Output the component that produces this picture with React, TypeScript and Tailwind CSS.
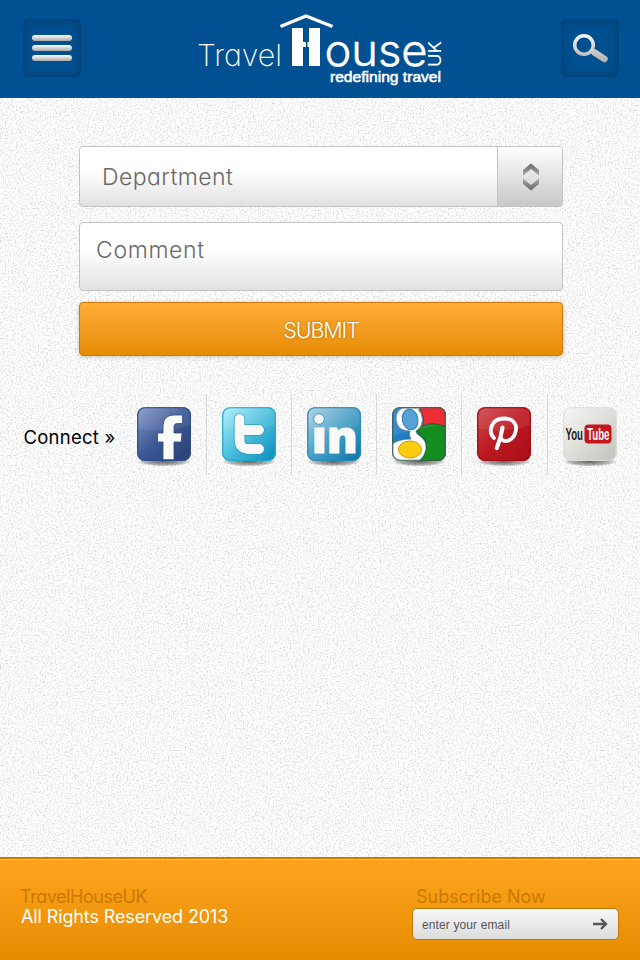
import React from 'react';

const gothic = "font-['Inter','Lato',sans-serif] [font-feature-settings:'cv11']";

function Paper() {
  return (
    <svg className="absolute inset-0 -z-10 h-full w-full" aria-hidden="true">
      <filter id="grain" x="0" y="0" width="100%" height="100%" colorInterpolationFilters="sRGB">
        <feTurbulence type="fractalNoise" baseFrequency="0.6" numOctaves="2" seed="4" />
        <feColorMatrix values="0.4 0 0 0 0.778  0.4 0 0 0 0.778  0.4 0 0 0 0.778  0 0 0 0 1" />
      </filter>
      <rect width="100%" height="100%" filter="url(#grain)" />
    </svg>
  );
}

function Logo() {
  return (
    <svg width="260" height="90" viewBox="0 0 260 90" fill="#fff" className={gothic}>
      <text x="7" y="60.7" fontSize="30" fontWeight="200" textLength="85" lengthAdjust="spacingAndGlyphs">Travel</text>
      <path d="M90.500 21.500L116 11L142.500 21.500" fill="none" stroke="#fff" strokeWidth="3.400" />
      <path d="M102 23h11v14h3v5h-3v19h-11zM119 23h11v38h-11V42h-1.500V37h1.500z" />
      <text x="134.500" y="61" fontSize="44" fontWeight="300" stroke="#fff" strokeWidth=".5" textLength="103" lengthAdjust="spacingAndGlyphs">ouse</text>
      <text transform="translate(250.500 62) rotate(-90)" fontSize="17" textLength="26" lengthAdjust="spacingAndGlyphs">UK</text>
      <text x="140" y="77" fontSize="14.500" fontWeight="400" stroke="#fff" strokeWidth=".55" fontFamily="Liberation Sans" textLength="111" lengthAdjust="spacingAndGlyphs">redefining travel</text>
    </svg>
  );
}

function HeaderButton({ label, children }: { label: string; children: React.ReactNode }) {
  return (
    <button aria-label={label} className="flex size-[58px] items-center justify-center rounded-[5px] bg-[#004f8e] shadow-[inset_0_0_9px_1px_#003d70]">
      {children}
    </button>
  );
}

function Tile({ id, from, mid, to, edge, gloss = true, children }: {
  id: string; from: string; mid: string; to: string; edge: string; gloss?: boolean; children: React.ReactNode;
}) {
  return (
    <svg width="54" height="62" viewBox="0 0 54 62" className="block overflow-visible">
      <defs>
        <linearGradient id={id} x1="0" y1="0" x2="1" y2="1">
          <stop offset="0" stopColor={from} />
          <stop offset=".5" stopColor={mid} />
          <stop offset="1" stopColor={to} />
        </linearGradient>
        <clipPath id={id + 'clip'}><rect width="54" height="54" rx="8" /></clipPath>
        <radialGradient id={id + 'shade'}>
          <stop offset="0" stopColor="#000" stopOpacity=".6" />
          <stop offset=".7" stopColor="#000" stopOpacity=".3" />
          <stop offset="1" stopColor="#000" stopOpacity="0" />
        </radialGradient>
      </defs>
      <ellipse cx="27" cy="54.500" rx="27" ry="5" fill={'url(#' + id + 'shade)'} />
      <rect width="54" height="54" rx="8" fill={'url(#' + id + ')'} />
      <g clipPath={'url(#' + id + 'clip)'}>
        {gloss && <path d="M0 0H54V18Q27 27 0 21Z" fill="#fff" opacity=".08" />}
        {children}
      </g>
      <rect x=".75" y=".75" width="52.500" height="52.500" rx="7.300" fill="none" stroke={edge} strokeWidth="1.200" />
    </svg>
  );
}

function Facebook() {
  return (
    <Tile id="fb" from="#8a9cc8" mid="#3b5795" to="#283f70" edge="#2f4f92">
      <path d="M26 52.700V35H20.500V26H26V20C26 11.500 30 8 38 8H45.500V16.500H41C38 16.500 37 17.500 37 20V26H45L44.300 35H37V52.700Z" fill="#fafafa" stroke="#2c4a87" strokeWidth=".8" />
    </Tile>
  );
}

function Twitter() {
  const d = 'M17.500 12V32.500Q17.500 42 27 42H37M17.500 23H37';
  return (
    <Tile id="tw" from="#b3f1ff" mid="#4cbfdc" to="#078abb" edge="#22a7cd">
      <path d={d} fill="none" stroke="#2a9fc1" strokeWidth="11.500" strokeLinecap="round" />
      <path d={d} fill="none" stroke="#f8f8f8" strokeWidth="9.800" strokeLinecap="round" />
    </Tile>
  );
}

function LinkedIn() {
  return (
    <Tile id="li" from="#b0d3e5" mid="#499fc6" to="#0974a8" edge="#2689b8">
      <circle cx="12" cy="12" r="5.300" fill="#f8f8f8" stroke="#2a86b2" strokeWidth=".8" />
      <text x="4.700" y="45.500" fontFamily="Open Sans" fontWeight="800" fontSize="44" textLength="46" lengthAdjust="spacingAndGlyphs" fill="#fafafa" stroke="#fafafa" strokeWidth="1">ın</text>
    </Tile>
  );
}

function Google() {
  return (
    <Tile id="go" from="#2d8ad0" mid="#2078be" to="#0d62a6" edge="#42604f" gloss={false}>
      <path d="M27 0H54V20Q42 14 31 19Q33 8 27 0Z" fill="#ee1c25" stroke="#a90d13" />
      <path d="M24 22Q39 13 54 20V54H28Q38 43 33 33Q27 28 24 22Z" fill="#158c20" stroke="#08630f" />
      <path d="M10 1H28Q25 3 29 6Q32 13 29 19Q27 22 24 24Q24 27 28 29Q35 34 34 42Q33 49 27 54H0V37Q7 32 19 32Q16 28 18 24Q9 24 5.500 18Q1 7 10 1Z" fill="#fff" stroke="#496b78" strokeWidth=".7" />
      <ellipse cx="18" cy="12.500" rx="7.800" ry="10.300" transform="rotate(-12 18 12)" fill="#4899d2" stroke="#1f6eac" />
      <ellipse cx="18" cy="42.500" rx="11.500" ry="8.500" fill="#fbcc10" stroke="#c99706" />
      <path d="M0 0H54V18Q27 20 0 29Z" fill="#fff" opacity=".08" />
    </Tile>
  );
}

function Pinterest() {
  return (
    <Tile id="pi" from="#cf4a50" mid="#bd1821" to="#a80f18" edge="#a20c16">
      <path d="M17 31C11 25 13.500 11.500 27 11.500C37 11.500 40.500 18 38.500 25C36.500 33 28 37 24 31.500" fill="none" stroke="#fff" strokeWidth="3.800" strokeLinecap="round" />
      <path d="M25.500 20.500Q24 31 19.800 41" fill="none" stroke="#fff" strokeWidth="4.200" strokeLinecap="round" />
    </Tile>
  );
}

function YouTube() {
  return (
    <Tile id="yt" from="#f6f6f5" mid="#dededb" to="#c0c0bc" edge="#dfdfdd" gloss={false}>
      <rect x="21.500" y="17.500" width="27" height="19" rx="4" fill="#c4161c" />
      <g fontFamily="Liberation Sans" fontWeight="700" fontSize="16">
        <text x="2.500" y="33" textLength="17.500" lengthAdjust="spacingAndGlyphs" fill="#222">You</text>
        <text x="24" y="33" textLength="22.500" lengthAdjust="spacingAndGlyphs" fill="#fff">Tube</text>
      </g>
    </Tile>
  );
}

const networks = [Facebook, Twitter, LinkedIn, Google, Pinterest, YouTube];

export default function App() {
  return (
    <div className={`relative isolate flex h-[960px] w-[640px] flex-col overflow-hidden ${gothic}`}>
      <Paper />
      <header className="flex h-[98px] items-start justify-between bg-[#005092] pr-[21px] pl-[23px]">
        <div className="pt-[19px]">
          <HeaderButton label="Menu">
            <span className="flex flex-col gap-1">
              {[0, 1, 2].map((n) => (
                <span key={n} className="h-1.5 w-10 rounded-[3px] bg-linear-to-b from-white to-[#a9a9a9]" />
              ))}
            </span>
          </HeaderButton>
        </div>
        <div className="pt-[5px] pr-0.5"><Logo /></div>
        <div className="pt-[19px]">
          <HeaderButton label="Search">
            <svg width="38" height="32" viewBox="0 0 38 32" fill="none">
              <linearGradient id="lens" x1="0" y1="0" x2="0" y2="32" gradientUnits="userSpaceOnUse">
                <stop stopColor="#fff" /><stop offset="1" stopColor="#aaa" />
              </linearGradient>
              <circle cx="13" cy="13" r="9.300" stroke="url(#lens)" strokeWidth="3.500" />
              <path d="M23.500 20.500L33.500 27" stroke="url(#lens)" strokeWidth="6.500" strokeLinecap="round" />
            </svg>
          </HeaderButton>
        </div>
      </header>

      <form className="mt-12 ml-[79px] flex w-[484px] flex-col">
        <div className="flex h-[61px] overflow-hidden rounded-[4px] border border-[#c3c3c3] bg-linear-to-b from-white from-40% to-[#e1e1e1]">
          <div className="flex flex-1 items-center pt-0.5 pl-[22px] text-[23px] font-light tracking-[0.45px] whitespace-nowrap text-[#696969]">Department</div>
          <div className="flex w-[66px] items-center justify-center border-l border-[#c3c3c3] bg-linear-to-b from-white to-[#c7c7c7] -mr-px pt-px">
            <svg width="16" height="28" viewBox="0 0 16 28">
              <linearGradient id="up" x2="0" y2="1"><stop stopColor="#686868" /><stop offset="1" stopColor="#aaa" /></linearGradient>
              <linearGradient id="down" x2="0" y2="1"><stop stopColor="#aaa" /><stop offset="1" stopColor="#686868" /></linearGradient>
              <path d="M8 .500L16 7V12.500L8 6L0 12.500V7Z" fill="url(#up)" />
              <path d="M8 27.500L0 21V15.500L8 22L16 15.500V21Z" fill="url(#down)" />
            </svg>
          </div>
        </div>
        <div className="mt-[15px] h-[69px] rounded-[4px] border border-[#c3c3c3] bg-linear-to-b from-white from-40% to-[#e1e1e1] pt-[11px] pl-4 text-[23px] leading-8 font-light tracking-[0.65px] text-[#696969]">Comment</div>
        <button type="button" className="mt-[11px] flex h-[54px] items-center justify-center rounded-[4px] border border-[#cc7906] bg-linear-to-b from-[#ffae34] to-[#e68c00] pt-0.5 text-[21.5px] font-light tracking-[-1.1px] text-white shadow-[0_1px_5px_#0003] [text-shadow:0_0_3px_#a86700]">SUBMIT</button>
      </form>

      <section className="mt-[38px] flex h-[81px]">
        <div className="w-[121px] shrink-0 pt-[29px] pl-[23.5px] text-[18.5px] leading-7 tracking-[0.25px] whitespace-nowrap text-black">Connect »</div>
        {networks.map((Icon, n) => (
          <div key={n} className={n === 5 ? 'ml-px w-[85px] shrink-0 border-l border-[#d8d8d8] pt-[13px] pl-[15px]' : n ? 'w-[85px] shrink-0 border-l border-[#d8d8d8] pt-[13px] pl-[15px]' : 'w-[85px] shrink-0 pt-[13px] pl-4'}>
            <Icon />
          </div>
        ))}
      </section>

      <footer className="mt-auto flex h-[103px] justify-between border-t-2 border-[#d17800] bg-linear-to-b from-[#ffa51c] to-[#e68c00] pr-[21px] pl-[21px] text-[18px] leading-5 shadow-[inset_0_1px_0_#ffc266]">
        <div className="pt-7">
          <div className="-ml-px tracking-[-0.45px] text-[#cc7800]">TravelHouseUK</div>
          <div className="tracking-[-0.12px] text-white">All Rights Reserved 2013</div>
        </div>
        <div className="w-[207px] pt-7">
          <div className="pl-1 text-[#cc7800]">Subscribe Now</div>
          <div className="mt-[1px] flex h-8 items-center justify-between rounded-[5px] border border-[#bd7609] bg-linear-to-b from-[#f8f8f8] to-[#dcdcdc] pr-[10px] pl-[9px] font-['Liberation_Sans',sans-serif] text-[12px] tracking-[0.12px] text-[#555]">
            <span className="pt-0.5">enter your email</span>
            <svg width="15" height="12" viewBox="0 0 15 12" fill="none" stroke="#555" strokeWidth="2.300"><path d="M0 6H13M8 1L13 6L8 11" /></svg>
          </div>
        </div>
      </footer>
    </div>
  );
}
